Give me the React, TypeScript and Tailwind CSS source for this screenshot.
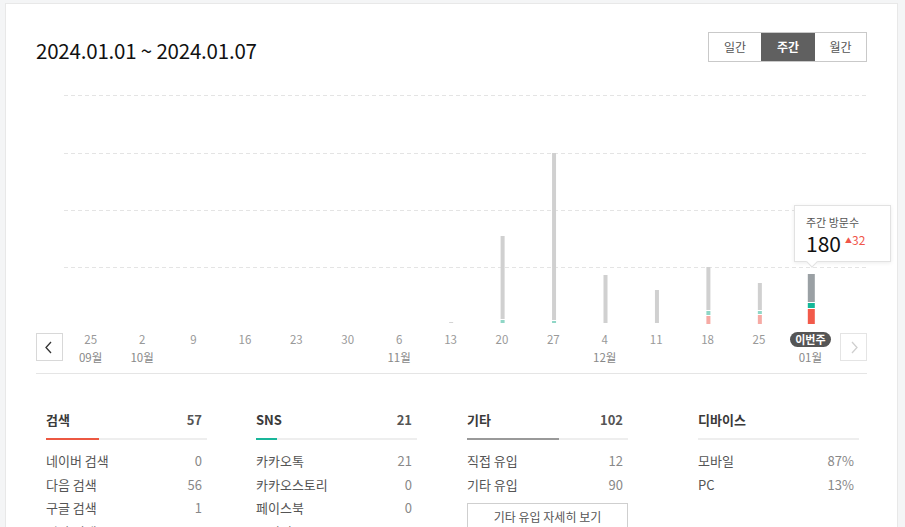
import { useState } from "react";

const FONT = { fontFamily: '"Noto Sans CJK KR", "Noto Sans", sans-serif' };

type Week = { d: string; m?: string; current?: boolean };

const WEEKS: Week[] = [
  { d: "25", m: "09월" },
  { d: "2", m: "10월" },
  { d: "9" },
  { d: "16" },
  { d: "23" },
  { d: "30" },
  { d: "6", m: "11월" },
  { d: "13" },
  { d: "20" },
  { d: "27" },
  { d: "4", m: "12월" },
  { d: "11" },
  { d: "18" },
  { d: "25" },
  { d: "이번주", m: "01월", current: true },
];

// segments: [top, bottom, colour] in chart coords (baseline = 238)
const BARS: Record<number, { w: number; segs: [number, number, string][] }> = {
  7: { w: 4, segs: [[237, 238, "#d4d4d4"]] },
  8: { w: 4, segs: [[151, 234, "#d0d0d0"], [235, 238, "#8fd6c6"]] },
  9: { w: 4, segs: [[68, 235, "#d0d0d0"], [236, 238, "#8fd6c6"]] },
  10: { w: 4, segs: [[190, 238, "#d0d0d0"]] },
  11: { w: 4, segs: [[205, 238, "#d0d0d0"]] },
  12: { w: 4, segs: [[182, 225, "#d0d0d0"], [226, 230, "#8fd6c6"], [231, 239, "#f6aaa4"]] },
  13: { w: 4, segs: [[198, 225, "#d0d0d0"], [226, 229, "#8fd6c6"], [230, 239, "#f6aaa4"]] },
  14: { w: 7, segs: [[189, 217, "#9aa0a4"], [218, 223, "#14b798"], [224, 239, "#f25a4a"]] },
};

const GRID = [10, 68, 125, 182];

type Row = { label: string; value: string };
type Col = { title: string; total?: string; fill: number; color: string; rows: Row[]; ml: string; more?: boolean };

const COLS: Col[] = [
  {
    title: "검색",
    total: "57",
    fill: 53,
    color: "bg-[#ec5842]",
    ml: "ml-0",
    rows: [
      { label: "네이버 검색", value: "0" },
      { label: "다음 검색", value: "56" },
      { label: "구글 검색", value: "1" },
      { label: "기타 검색", value: "0" },
    ],
  },
  {
    title: "SNS",
    total: "21",
    fill: 21,
    color: "bg-[#19b69a]",
    ml: "ml-[49px]",
    rows: [
      { label: "카카오톡", value: "21" },
      { label: "카카오스토리", value: "0" },
      { label: "페이스북", value: "0" },
      { label: "트위터", value: "0" },
    ],
  },
  {
    title: "기타",
    total: "102",
    fill: 92,
    color: "bg-[#999999]",
    ml: "ml-[50px]",
    more: true,
    rows: [
      { label: "직접 유입", value: "12" },
      { label: "기타 유입", value: "90" },
    ],
  },
  {
    title: "디바이스",
    fill: 0,
    color: "bg-[#999999]",
    ml: "ml-[70px]",
    rows: [
      { label: "모바일", value: "87%" },
      { label: "PC", value: "13%" },
    ],
  },
];

function Chevron({ dir, color }: { dir: "left" | "right"; color: string }) {
  const pts = dir === "left" ? "9,3 4,8.5 9,14" : "5,3 10,8.5 5,14";
  return (
    <svg width="14" height="17" viewBox="0 0 14 17" fill="none">
      <polyline points={pts} stroke={color} strokeWidth="1.3" />
    </svg>
  );
}

/** Weekly visitor chart with traffic source breakdown. */
export default function App() {
  const [period, setPeriod] = useState("주간");
  const step = 51.45;

  return (
    <div className="min-h-screen bg-[#f4f5f6] pl-[5px] pt-[3px]" style={FONT}>
      <div className="w-[893px] min-h-[600px] border border-[#e8e8e8] bg-white px-[30px] pt-[28px]">
        {/* Header */}
        <div className="flex h-[30px] items-center justify-between">
          <h1 className="mt-[5px] text-[20.5px] leading-[28px] tracking-[-0.2px] text-[#111]">
            2024.01.01 ~ 2024.01.07
          </h1>
          <div className="flex h-[30px] border border-[#c9c9c9] text-[12px]">
            {["일간", "주간", "월간"].map((p, i) => (
              <button
                key={p}
                onClick={() => setPeriod(p)}
                className={
                  period === p
                    ? "w-[54px] bg-[#606060] font-bold text-white"
                    : i === 0
                    ? "w-[52px] text-[#555]"
                    : "w-[51px] text-[#555]"
                }
              >
                {p}
              </button>
            ))}
          </div>
        </div>

        {/* Chart */}
        <div className="relative mt-[23px] ml-[28px]">
          <svg width="802" height="239" viewBox="0 0 802 239">
            {GRID.map((y) => (
              <line key={y} x1="0" x2="802" y1={y + 0.5} y2={y + 0.5} stroke="#e4e4e4" strokeDasharray="4 3" />
            ))}
            {Object.entries(BARS).map(([k, b]) => {
              const cx = 27 + Number(k) * step;
              return b.segs.map(([t, btm, c], j) => (
                <rect key={k + "-" + j} x={cx - b.w / 2} y={t} width={b.w} height={btm - t} fill={c} />
              ));
            })}
          </svg>

          {/* Tooltip */}
          <div className="absolute left-[730px] top-[120px] h-[57px] w-[97px] border border-[#e2e2e2] bg-white px-[11px] pt-[8px] shadow-[0_1px_4px_rgba(0,0,0,0.08)]">
            <div className="text-[11px] leading-[16px] text-[#555]">주간 방문수</div>
            <div className="flex items-start">
              <span className="text-[21px] leading-[26px] text-[#111]">180</span>
              <span className="ml-[4px] mt-[3px] text-[12px] leading-[14px] text-[#f0554a]">
                <span className="text-[7px] align-[2px]">▲</span>32
              </span>
            </div>
            <div className="absolute left-[13px] bottom-[-5px] h-[8px] w-[8px] rotate-45 border-b border-r border-[#e2e2e2] bg-white" />
          </div>
        </div>

        {/* Axis labels */}
        <div className="mt-[7px] flex items-start">
          <button className="mt-[2px] flex h-[28px] w-[27px] items-center justify-center border border-[#d8d8d8]">
            <Chevron dir="left" color="#333" />
          </button>
          <div className="ml-[2px] flex w-[772px]">
            {WEEKS.map((w, i) => (
              <div key={i} className="flex flex-1 flex-col items-center">
                {w.current ? (
                  <span className="mt-[1px] flex h-[15px] items-center rounded-full bg-[#555] px-[5px] text-[11px] font-bold leading-[15px] text-white">
                    {w.d}
                  </span>
                ) : (
                  <span className="h-[16px] text-[11.5px] leading-[16px] text-[#999]">{w.d}</span>
                )}
                <span className="mt-[2px] h-[16px] text-[11.5px] leading-[16px] text-[#888]">{w.m ?? ""}</span>
              </div>
            ))}
          </div>
          <button className="ml-[4px] mt-[2px] flex h-[28px] w-[27px] items-center justify-center border border-[#e4e4e4]">
            <Chevron dir="right" color="#cfcfcf" />
          </button>
        </div>

        <div className="mt-[8px] border-t border-[#e5e5e5]" />

        {/* Breakdown */}
        <div className="flex pl-[10px] pt-[36px]">
          {COLS.map((c) => (
            <div key={c.title} className={"w-[161px] " + c.ml}>
              <div className="flex h-[20px] items-center justify-between pr-[5px]">
                <span className="text-[13px] font-bold text-[#3a3a3a]">{c.title}</span>
                {c.total && <span className="text-[13px] font-bold text-[#555]">{c.total}</span>}
              </div>
              <div className="mt-[8px] h-[2px] w-full bg-[#eeeeee]">
                <div className={"h-full " + c.color} style={{ width: c.fill }} />
              </div>
              <div className="mt-[9px]">
                {c.rows.map((r) => (
                  <div key={r.label} className="flex h-[23.5px] items-center justify-between pr-[5px] text-[13px]">
                    <span className="text-[#555]">{r.label}</span>
                    <span className="text-[#888]">{r.value}</span>
                  </div>
                ))}
              </div>
              {c.more && (
                <button className="mt-[7px] h-[28px] w-full border border-[#cfcfcf] text-[12px] text-[#555]">
                  기타 유입 자세히 보기
                </button>
              )}
            </div>
          ))}
        </div>
      </div>
    </div>
  );
}
